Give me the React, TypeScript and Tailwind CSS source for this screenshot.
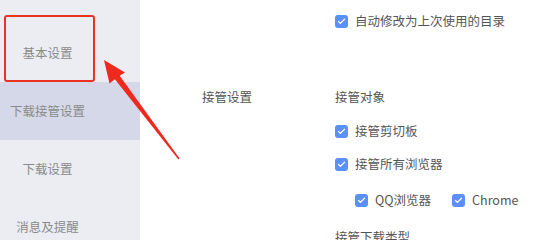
import { Check } from 'lucide-react';

const navItems = ['基本设置', '下载接管设置', '下载设置', '消息及提醒'];

function Box() {
  return (
    <span className="flex h-[13px] w-[13px] shrink-0 items-center justify-center rounded-[3px] bg-[#5b8ff9]">
      <Check className="h-[9px] w-[9px] text-white" strokeWidth={3.5} />
    </span>
  );
}

function CheckRow({ label, className = '' }: { label: string; className?: string }) {
  return (
    <div className={`flex h-[18px] items-center gap-[7px] ${className}`}>
      <Box />
      <span>{label}</span>
    </div>
  );
}

export default function App() {
  return (
    <div
      className="relative flex h-[240px] w-[543px] overflow-hidden bg-white text-[12.5px] leading-[18px]"
      style={{ fontFamily: '"Noto Sans CJK SC", "Noto Sans", sans-serif' }}
    >
      {/* Sidebar */}
      <div className="w-[140px] shrink-0 bg-[#ebedf3] pt-[24px] text-[#8a8a8a]">
        {navItems.map((item, i) => (
          <div
            key={item}
            className={`flex h-[58px] items-center ${i === 1 ? 'bg-[#d4d8e8]' : ''}`}
          >
            <span className="w-[95px] text-center">{item}</span>
          </div>
        ))}
      </div>

      {/* Content */}
      <div className="flex-1 pl-[62px] text-[#555]">
        <div className="pl-[133px] pt-[12px]">
          <CheckRow label="自动修改为上次使用的目录" />
        </div>
        <div className="mt-[58px] flex">
          <div className="w-[133px] shrink-0">接管设置</div>
          <div className="flex flex-col">
            <div className="h-[18px]">接管对象</div>
            <CheckRow label="接管剪切板" className="mt-[16px]" />
            <CheckRow label="接管所有浏览器" className="mt-[15px]" />
            <div className="mt-[18px] flex pl-[20px]">
              <CheckRow label="QQ浏览器" />
              <CheckRow label="Chrome" className="ml-[21px]" />
            </div>
            <div className="mt-[19px] h-[18px]">接管下载类型</div>
          </div>
        </div>
      </div>

      {/* Annotation box */}
      <div className="absolute left-[4px] top-[15px] h-[67px] w-[91px] rounded-[3px] border-2 border-[#ea3323]" />

      {/* Annotation arrow */}
      <svg className="pointer-events-none absolute left-0 top-0" width="543" height="240" viewBox="0 0 543 240">
        <polygon
          points="104,60 125,72.5 119.7,75.7 179.6,158.5 178.4,159.5 114.9,79.3 109.5,83.5"
          fill="#ee2a1e"
        />
      </svg>
    </div>
  );
}
